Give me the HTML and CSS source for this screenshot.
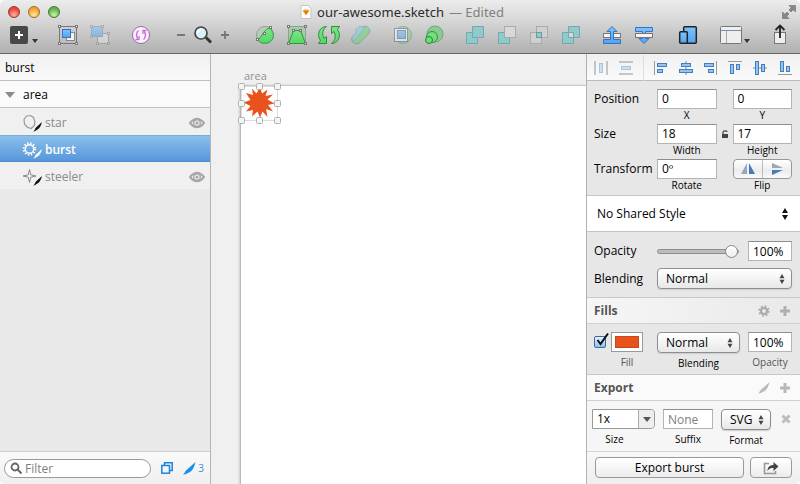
FILE: index.html
```html
<!DOCTYPE html>
<html lang="en">
<head>
<meta charset="utf-8">
<title>our-awesome.sketch</title>
<link rel="stylesheet" href="styles.css">
</head>
<body>
<svg class="defs" aria-hidden="true">
  <defs>
    <linearGradient id="blue" x1="0" y1="0" x2="0" y2="1"><stop offset="0" stop-color="#7cc4fb"/><stop offset="1" stop-color="#55a4f2"/></linearGradient>
    <linearGradient id="green" x1="0" y1="0" x2="0" y2="1"><stop offset="0" stop-color="#7be58a"/><stop offset="1" stop-color="#52d962"/></linearGradient>
    <symbol id="updown" viewBox="0 0 6 12"><path d="M0 5 3 0 6 5zM0 7 3 12 6 7z"/></symbol>
    <symbol id="eye" viewBox="0 0 16 12"><path d="M1 6Q8-2.500 15 6 8 14.500 1 6z" fill="none" stroke="#a6a6a6" stroke-width="2"/><circle cx="8" cy="6" r="3.300" fill="none" stroke="#a6a6a6" stroke-width="1.400"/><circle cx="8" cy="6" r="1.500" fill="#a6a6a6"/></symbol>
    <symbol id="blade" viewBox="0 0 14 14"><path d="M0 13.500C2 12 2.500 9 5 7.500L13.500 0C12.500 4 11 8.500 8 10.500 6 11 4 13.500 0 13.500z"/></symbol>
    <symbol id="plus" viewBox="0 0 12 12"><path d="M4.500 1h3v3.500H11v3H7.500V11h-3V7.500H1v-3h3.500z"/></symbol>
  </defs>
</svg>

<div class="window">
  <header class="chrome">
    <div class="titlebar">
      <div class="lights">
        <button class="light red" aria-label="Close"></button>
        <button class="light amber" aria-label="Minimize"></button>
        <button class="light lime" aria-label="Zoom window"></button>
      </div>
      <h1 class="title">
        <svg width="12" height="14" viewBox="0 0 12 14"><path d="M1 .5h7l3 3v10H1z" fill="#fdfdfd" stroke="#c4c4c4"/><path d="M2.500 6l1.500-1.500h4L9.500 6 6 10z" fill="#f5a623"/><path d="M4 6h4L6 10z" fill="#e0701c"/></svg>
        <span class="name">our-awesome.sketch</span><span class="state">— Edited</span>
      </h1>
      <button class="full" aria-label="Full screen"><svg width="14" height="14" viewBox="0 0 14 14" fill="#888" stroke="#6f6f6f" stroke-width=".6"><path d="M7 .5h6.500V7L11.200 4.700 9 7 7 5 9.200 2.800zM.5 7v6.500H7L4.700 11.200 7 9 5 7 2.800 9.200z"/></svg></button>
    </div>
    <nav class="toolbar" aria-label="Tools">
      <div class="group tight">
        <button class="tool" aria-label="Insert"><svg width="24" height="24" viewBox="0 0 24 24"><rect x="3" y="3" width="18" height="18" rx="2" fill="#484848"/><path d="M8 12h8M12 8v8" stroke="#fff" stroke-width="2"/></svg></button>
        <svg class="caret" width="8" height="24" viewBox="0 0 8 24"><path d="M1 16h6l-3 4z" fill="#333"/></svg>
      </div>
      <div class="group">
        <button class="tool" aria-label="Group"><svg width="24" height="24" viewBox="0 0 24 24"><rect x="3.500" y="3.500" width="17" height="17" fill="none" stroke="#777"/><rect x="10.500" y="9.500" width="8" height="8" fill="#f4f4f4" stroke="#888"/><rect x="6.500" y="6.500" width="8" height="8" fill="url(#blue)" stroke="#3574c4"/><g fill="#fff" stroke="#777"><rect x="2.500" y="2.500" width="2" height="2"/><rect x="19.500" y="2.500" width="2" height="2"/><rect x="2.500" y="19.500" width="2" height="2"/><rect x="19.500" y="19.500" width="2" height="2"/></g></svg></button>
        <button class="tool faded" aria-label="Ungroup"><svg width="24" height="24" viewBox="0 0 24 24"><rect x="9.500" y="10.500" width="11" height="10" fill="#e6e6e6" stroke="#888"/><rect x="3.500" y="3.500" width="11" height="10" fill="url(#blue)" stroke="#5d92cc"/><g fill="#eee" stroke="#888"><rect x="2.500" y="2.500" width="2" height="2"/><rect x="13.500" y="2.500" width="2" height="2"/><rect x="2.500" y="12.500" width="2" height="2"/><rect x="19.500" y="9.500" width="2" height="2"/><rect x="8.500" y="19.500" width="2" height="2"/><rect x="19.500" y="19.500" width="2" height="2"/></g></svg></button>
      </div>
      <div class="group">
        <button class="tool" aria-label="Create symbol"><svg width="24" height="24" viewBox="0 0 24 24" fill="none"><circle cx="12" cy="12" r="8.500" fill="#fbf3fc" stroke="#9a68a8"/><path d="M9.500 7.500C7 9.500 7 13.500 9 16M14.500 16.500c2.500-2 2.500-6 .5-8.500" stroke="#d16be0" stroke-width="1.500"/><path d="M6.500 16.500h3.500V13M17.500 7.500h-3.500V11" stroke="#d16be0" stroke-width="1.300"/></svg></button>
      </div>
      <div class="group zoom spaced">
        <button class="tool small" aria-label="Zoom out"><svg width="14" height="24" viewBox="0 0 14 24"><path d="M3 12h8" stroke="#777" stroke-width="1.800"/></svg></button>
        <button class="tool" aria-label="Zoom"><svg width="22" height="24" viewBox="0 0 22 24"><path d="M14 14.500l5 5" stroke="#333" stroke-width="3"/><circle cx="9" cy="10" r="6" fill="#d9f1fa" stroke="#444" stroke-width="1.700"/><path d="M5.500 10A4 4 0 0 1 9 6.500" stroke="#fff" fill="none" stroke-width="1.500"/></svg></button>
        <button class="tool small" aria-label="Zoom in"><svg width="14" height="24" viewBox="0 0 14 24"><path d="M3 12h8M7 8v8" stroke="#777" stroke-width="1.800"/></svg></button>
      </div>
      <div class="group spaced">
        <button class="tool" aria-label="Edit"><svg width="24" height="24" viewBox="0 0 24 24"><circle cx="12" cy="12" r="8.500" fill="#9fcfa5" fill-opacity=".4" stroke="#8aa58d"/><path d="M4.500 17C9 15 9 8 16 5c4 2 5 7 4 10-2 5-10 8-15.500 2z" fill="url(#green)" stroke="#3a9c49"/><g fill="#fff" stroke="#777"><rect x="3.500" y="15.500" width="2" height="2"/><rect x="10.500" y="9.500" width="2" height="2"/><rect x="16.500" y="3.500" width="2" height="2"/></g></svg></button>
        <button class="tool" aria-label="Transform"><svg width="24" height="24" viewBox="0 0 24 24"><rect x="3.500" y="3.500" width="17" height="17" fill="#8cc893" fill-opacity=".6" stroke="#8aa58d"/><path d="M8.500 7.500h7l5 13h-17z" fill="url(#green)" stroke="#35903f"/><g fill="#eee" stroke="#777"><rect x="2.500" y="2.500" width="2" height="2"/><rect x="19.500" y="2.500" width="2" height="2"/><rect x="2.500" y="19.500" width="2" height="2"/><rect x="19.500" y="19.500" width="2" height="2"/><rect x="7.500" y="6.500" width="2" height="2"/><rect x="14.500" y="6.500" width="2" height="2"/></g></svg></button>
        <button class="tool" aria-label="Rotate"><svg width="24" height="24" viewBox="0 0 24 24" fill="url(#green)" stroke="#338c3e"><path d="M9.500 3.500C3 3.500-1 11 3.500 17.500L1.500 20.500h8v-7L7 15.500C4.500 11 6 6 9.500 3.500zM14.500 20.500C21 20.500 25 13 20.500 6.500L22.500 3.500h-8v7l2.500-2c2.500 4.500 1 9.500-2.500 12z"/></svg></button>
        <button class="tool faded" aria-label="Flatten"><svg width="24" height="24" viewBox="0 0 24 24"><path d="M3.500 13.500 13 4.500a4 4 0 0 1 6 0 4 4 0 0 1 1 6L11 19.500a5 5 0 0 1-7 0 4.500 4.500 0 0 1-.5-6z" fill="#63d572" stroke="#4d965a"/><path d="M4 19 3 16l.5-2.500L7 10V6.500l3-3h3l3 1z" fill="#7dcae5" stroke="#4c93aa" stroke-width=".7"/></svg></button>
      </div>
      <div class="group">
        <button class="tool faded" aria-label="Mask"><svg width="24" height="24" viewBox="0 0 24 24"><circle cx="13" cy="12" r="8.500" fill="#7fd18a" stroke="#529a5d"/><rect x="4.500" y="5.500" width="13" height="13" fill="#fff" stroke="#666"/><rect x="7.500" y="7.500" width="8" height="8" fill="url(#blue)" stroke="#3574c4"/></svg></button>
        <button class="tool" aria-label="Scale"><svg width="24" height="24" viewBox="0 0 24 24"><circle cx="13" cy="11" r="8" fill="#8acb92" stroke="#6ba874"/><circle cx="10" cy="14" r="5.500" fill="#74dd80" stroke="#35903f"/><circle cx="7" cy="17" r="3.500" fill="#64e274" stroke="#287e35"/></svg></button>
      </div>
      <div class="group">
        <button class="tool" aria-label="Union"><svg width="24" height="24" viewBox="0 0 24 24"><path d="M9.500 3.500h11v11h-6v6h-11v-11h6z" fill="#8fcbcd" stroke="#75a8aa"/><path d="M9.500 9.500v5h5" fill="none" stroke="#75a8aa"/></svg></button>
        <button class="tool" aria-label="Subtract"><svg width="24" height="24" viewBox="0 0 24 24"><path d="M3.500 9.500h6v5h5v6h-11z" fill="#8fcbcd" stroke="#75a8aa"/><rect x="9.500" y="3.500" width="11" height="11" fill="#d8d8d8" stroke="#aaa"/></svg></button>
        <button class="tool" aria-label="Intersect"><svg width="24" height="24" viewBox="0 0 24 24"><rect x="9.500" y="3.500" width="11" height="11" fill="#d0d0d0" stroke="#aaa"/><rect x="3.500" y="9.500" width="11" height="11" fill="#d0d0d0" stroke="#aaa"/><rect x="9.500" y="9.500" width="5" height="5" fill="#8fcbcd" stroke="#689c9e"/></svg></button>
        <button class="tool" aria-label="Difference"><svg width="24" height="24" viewBox="0 0 24 24"><path d="M9.500 3.500h11v11h-6v6h-11v-11h6z" fill="#8fcbcd" stroke="#75a8aa"/><rect x="9.500" y="9.500" width="5" height="5" fill="#d8d8d8" stroke="#75a8aa"/></svg></button>
      </div>
      <div class="group">
        <button class="tool" aria-label="Forward"><svg width="24" height="24" viewBox="0 0 24 24"><rect x="3.500" y="10.500" width="17" height="4" fill="#f4f4f4" stroke="#777"/><path d="M12 3.500l5 5h-3.500v8h7v4h-17v-4h7v-8H7z" fill="url(#blue)" stroke="#3574c4"/></svg></button>
        <button class="tool" aria-label="Backward"><svg width="24" height="24" viewBox="0 0 24 24"><path d="M3.500 4.500h17v4h-7v7H17l-5 5-5-5h3.500v-7h-7z" fill="url(#blue)" stroke="#3574c4"/><rect x="3.500" y="10.500" width="17" height="4" fill="#f4f4f4" stroke="#777"/></svg></button>
      </div>
      <div class="group spaced">
        <button class="tool" aria-label="Mirror"><svg width="24" height="24" viewBox="0 0 24 24" fill="url(#blue)" stroke="#222" stroke-width="1.500"><rect x="6.700" y="3.700" width="12.600" height="16.600" rx="1"/><rect x="2.700" y="8.700" width="7.600" height="11.600" rx="1"/></svg></button>
      </div>
      <div class="group tight">
        <button class="tool" aria-label="View"><svg width="24" height="24" viewBox="0 0 24 24"><rect x="2.500" y="3.500" width="21" height="17" rx="1" fill="#eee" stroke="#777"/><path d="M3 7.500h20" stroke="#7b8db5"/><path d="M8.500 8v12" stroke="#aaa"/></svg></button>
        <svg class="caret" width="8" height="24" viewBox="0 0 8 24"><path d="M2 16h6l-3 4z" fill="#333"/></svg>
      </div>
      <div class="group last">
        <button class="tool" aria-label="Share"><svg width="24" height="24" viewBox="0 0 24 24" fill="none"><rect x="6.500" y="9.500" width="11" height="11" fill="#eee" stroke="#777"/><path d="M12 15V3M7.500 7 12 2.500 16.500 7" stroke="#222" stroke-width="1.800"/></svg></button>
      </div>
    </nav>
  </header>

  <main class="body">
    <aside class="sidebar">
      <div class="page">burst</div>
      <div class="board"><svg width="10" height="6" viewBox="0 0 10 6"><path d="M0 0h10L5 6z" fill="#8c8c8c"/></svg>area</div>
      <ul class="layers">
        <li class="layer">
          <svg class="shape" width="20" height="18" viewBox="0 0 20 18"><path d="M4.500 2 8.500 1.500l3 2 1.500 4.500-1 4-3 2.500-4-1.500L2.500 10 2 5.500z" fill="none" stroke="#999" stroke-width="1.200"/><path d="M11 17.500c2-.5 1.500-3 3.500-4.500L20 8c-1 3.500-2 6-4.500 7.500-1.500.5-2 2-4.500 2z" fill="#111"/></svg>
          <span class="label">star</span>
          <button class="eye" aria-label="Hide star"><svg width="16" height="12"><use href="#eye"/></svg></button>
        </li>
        <li class="layer selected">
          <svg class="shape" width="20" height="18" viewBox="0 0 20 18"><circle cx="7.500" cy="8" r="4.200" fill="none" stroke="#fff" stroke-width="1.400"/><circle cx="7.500" cy="8" r="5.800" fill="none" stroke="#fff" stroke-width="2" stroke-dasharray="1.400 1.637"/><path d="M11 17.500c2-.5 1.500-3 3.500-4.500L20 8c-1 3.500-2 6-4.500 7.500-1.500.5-2 2-4.500 2z" fill="#fff"/></svg>
          <span class="label">burst</span>
        </li>
        <li class="layer">
          <svg class="shape" width="20" height="18" viewBox="0 0 20 18"><path d="M7.500 1.500 8.700 6.800 14 8 8.700 9.200 7.500 14.500 6.300 9.200 1 8 6.300 6.800z" fill="#f4f4f4" stroke="#888"/><path d="M11 17.500c2-.5 1.500-3 3.500-4.500L20 8c-1 3.500-2 6-4.500 7.500-1.500.5-2 2-4.500 2z" fill="#111"/></svg>
          <span class="label">steeler</span>
          <button class="eye" aria-label="Hide steeler"><svg width="16" height="12"><use href="#eye"/></svg></button>
        </li>
      </ul>
      <footer class="filterbar">
        <label class="search"><svg width="12" height="12" viewBox="0 0 12 12" fill="none" stroke="#666"><circle cx="5" cy="5" r="3.500" stroke-width="1.800"/><path d="M7.500 7.500l4 4" stroke-width="2"/></svg><input type="search" placeholder="Filter" aria-label="Filter layers"></label>
        <button class="plain" aria-label="Show slices"><svg width="12" height="12" viewBox="0 0 12 12" fill="none" stroke="#1c82dc" stroke-width="1.500"><path d="M3.500 3V.8h7.700v7.700H9"/><rect x=".8" y="3.500" width="7.700" height="7.700"/></svg></button>
        <button class="plain count"><svg width="13" height="13" fill="#1590f0"><use href="#blade"/></svg>3</button>
      </footer>
    </aside>

    <section class="canvas">
      <div class="caption">area</div>
      <div class="artboard">
        <svg class="burst" width="46" height="44" viewBox="-5 -4 46 44">
          <rect x="0.500" y="0.500" width="36" height="34" fill="none" stroke="#ddd"/>
          <path d="M19 1 21 7.500 26.500 3.500 24.500 10 32 8.500 26.500 13.500 33.500 17.500 27 19 32 25.500 25 23 26.500 31 21.500 25.500 19 31.500 16.500 25.500 11 30.500 12 24 5 25.500 9.500 20 2.500 16.500 9.500 14 5 7 12 9 11 2.500 15.500 7.500z" fill="#e9521d"/>
          <g fill="#f4f4f4" stroke="#b0b0b0"><rect x="-2.500" y="-2.500" width="6" height="6" rx="1"/><rect x="15.500" y="-2.500" width="6" height="6" rx="1"/><rect x="33.500" y="-2.500" width="6" height="6" rx="1"/><rect x="-2.500" y="14.500" width="6" height="6" rx="1"/><rect x="33.500" y="14.500" width="6" height="6" rx="1"/><rect x="-2.500" y="31.500" width="6" height="6" rx="1"/><rect x="15.500" y="31.500" width="6" height="6" rx="1"/><rect x="33.500" y="31.500" width="6" height="6" rx="1"/></g>
        </svg>
      </div>
    </section>

    <aside class="inspector">
      <div class="align">
        <button aria-label="Distribute horizontally" class="faded"><svg width="16" height="16" viewBox="0 0 16 16"><path d="M2 1v14M14 1v14" stroke="#777" stroke-width="1.500"/><rect x="6.500" y="3.500" width="3" height="9" fill="#9bd0f5" stroke="#5c98c8"/></svg></button>
        <button aria-label="Distribute vertically" class="faded"><svg width="16" height="16" viewBox="0 0 16 16"><path d="M1 2h14M1 14h14" stroke="#777" stroke-width="1.500"/><rect x="3.500" y="6.500" width="9" height="3" fill="#9bd0f5" stroke="#5c98c8"/></svg></button>
        <span class="rule"></span>
        <button aria-label="Align left"><svg width="16" height="16" viewBox="0 0 16 16"><path d="M1.500 1v14" stroke="#999"/><g fill="#8cc4fb" stroke="#4a7db8"><rect x="4.500" y="3.500" width="9" height="3"/><rect x="4.500" y="9.500" width="5" height="3"/></g></svg></button>
        <button aria-label="Align center"><svg width="16" height="16" viewBox="0 0 16 16"><path d="M8 1v14" stroke="#aaa" stroke-width="1.500"/><g fill="#8cc4fb" stroke="#4a7db8"><rect x="3.500" y="3.500" width="9" height="3"/><rect x="1.500" y="9.500" width="13" height="3"/></g></svg></button>
        <button aria-label="Align right"><svg width="16" height="16" viewBox="0 0 16 16"><path d="M14.500 1v14" stroke="#999"/><g fill="#8cc4fb" stroke="#4a7db8"><rect x="2.500" y="3.500" width="9" height="3"/><rect x="6.500" y="9.500" width="5" height="3"/></g></svg></button>
        <button aria-label="Align top"><svg width="16" height="16" viewBox="0 0 16 16"><path d="M1 1.500h14" stroke="#999"/><g fill="#8cc4fb" stroke="#4a7db8"><rect x="3.500" y="4.500" width="3" height="9"/><rect x="9.500" y="4.500" width="3" height="5"/></g></svg></button>
        <button aria-label="Align middle"><svg width="16" height="16" viewBox="0 0 16 16"><path d="M1 8h14" stroke="#aaa" stroke-width="1.500"/><g fill="#8cc4fb" stroke="#4a7db8"><rect x="3.500" y="1.500" width="3" height="13"/><rect x="9.500" y="4.500" width="3" height="7"/></g></svg></button>
        <button aria-label="Align bottom"><svg width="16" height="16" viewBox="0 0 16 16"><path d="M1 14.500h14" stroke="#999"/><g fill="#8cc4fb" stroke="#4a7db8"><rect x="3.500" y="1.500" width="3" height="10"/><rect x="9.500" y="6.500" width="3" height="5"/></g></svg></button>
      </div>

      <div class="geometry">
        <span>Position</span>
        <div class="cell"><input class="field" id="x" value="0"><label for="x">X</label></div>
        <span></span>
        <div class="cell"><input class="field" id="y" value="0"><label for="y">Y</label></div>
        <span>Size</span>
        <div class="cell"><input class="field" id="w" value="18"><label for="w">Width</label></div>
        <button class="plain lock" aria-label="Lock proportions"><svg width="8" height="8" viewBox="0 0 8 8"><rect x="1" y="4" width="6" height="4" fill="#444"/><path d="M2 4V2.500C2 .5 6 .5 6 2" fill="none" stroke="#444" stroke-width="1.200"/></svg></button>
        <div class="cell"><input class="field" id="h" value="17"><label for="h">Height</label></div>
        <span>Transform</span>
        <div class="cell"><input class="field" id="r" value="0º"><label for="r">Rotate</label></div>
        <span></span>
        <div class="cell">
          <div class="flip">
            <button aria-label="Flip horizontal"><svg width="14" height="12" viewBox="0 0 14 12"><path d="M6 0v11H0z" fill="#9aa5b5"/><path d="M8 0v11h6z" fill="#4879b8"/></svg></button>
            <button aria-label="Flip vertical"><svg width="12" height="12" viewBox="0 0 12 12"><path d="M1 0v5h11z" fill="#9aa5b5"/><path d="M1 12V7h11z" fill="#4879b8"/></svg></button>
          </div>
          <span class="note">Flip</span>
        </div>
      </div>

      <div class="shared"><select aria-label="Shared style"><option>No Shared Style</option></select><svg class="arrows" width="6" height="12"><use href="#updown"/></svg></div>

      <div class="blend">
        <label for="op">Opacity</label>
        <div class="opacity"><input class="slider" id="op" type="range" value="100"><input class="field pct" aria-label="Opacity percent" value="100%"></div>
        <label for="bl">Blending</label>
        <div class="pick"><select id="bl"><option>Normal</option></select><svg class="arrows" width="6" height="10"><use href="#updown"/></svg></div>
      </div>

      <div class="heading">
        <h2>Fills</h2>
        <button class="plain" aria-label="Fill options"><svg width="12" height="12" viewBox="0 0 12 12" fill="none" stroke="#aaa"><circle cx="6" cy="6" r="3" stroke-width="2.200"/><circle cx="6" cy="6" r="4.800" stroke-width="1.800" stroke-dasharray="1.800 1.970"/></svg></button>
        <button class="plain" aria-label="Add fill"><svg width="12" height="12" fill="#b0b0b0"><use href="#plus"/></svg></button>
      </div>

      <div class="fills">
        <label class="tick"><input type="checkbox" checked aria-label="Fill enabled"><svg width="16" height="16" viewBox="0 0 16 16"><path d="M3.500 8l3 4L14 1.500" fill="none" stroke="#111" stroke-width="2"/></svg></label>
        <div class="cell"><button class="well" aria-label="Fill color"><span></span></button><span class="note dim">Fill</span></div>
        <div class="cell fillmode"><div class="pick"><select id="fb"><option>Normal</option></select><svg class="arrows" width="6" height="10"><use href="#updown"/></svg></div><label for="fb">Blending</label></div>
        <div class="cell"><input class="field pct" id="fo" value="100%"><label class="dim" for="fo">Opacity</label></div>
      </div>

      <div class="heading pale">
        <h2>Export</h2>
        <button class="plain" aria-label="Add slice"><svg width="12" height="12" fill="#bbb"><use href="#blade"/></svg></button>
        <button class="plain" aria-label="Add export"><svg width="12" height="12" fill="#b8b8b8"><use href="#plus"/></svg></button>
      </div>

      <div class="export">
        <div class="cell"><div class="combo"><input id="es" value="1x"><button aria-label="Choose size"><svg width="8" height="5" viewBox="0 0 8 5"><path d="M0 0h8L4 5z" fill="#555"/></svg></button></div><label for="es">Size</label></div>
        <div class="cell"><input class="field" id="sf" placeholder="None"><label for="sf">Suffix</label></div>
        <div class="cell"><div class="pick"><select id="fm"><option>SVG</option></select><svg class="arrows" width="6" height="10"><use href="#updown"/></svg></div><label for="fm">Format</label></div>
        <button class="plain remove" aria-label="Remove export"><svg width="10" height="10" viewBox="0 0 10 10"><path d="M1.500 1.500l7 7M8.500 1.500l-7 7" stroke="#bdbdbd" stroke-width="3"/></svg></button>
      </div>

      <div class="actions">
        <button class="push wide">Export burst</button>
        <button class="push" aria-label="Share export"><svg width="16" height="14" viewBox="0 0 16 14"><path d="M6 2.500H1.500v10h11V10" fill="none" stroke="#999" stroke-width="1.600"/><path d="M4.500 10C4.500 6 7 4 10.500 4V1l5 4.500-5 4.500V7C8 7 6 7.500 4.500 10z" fill="#444"/></svg></button>
      </div>
    </aside>
  </main>
</div>
</body>
</html>
```
FILE: styles.css
```css
* { box-sizing: border-box; }

body {
  margin: 0;
  background: #fff;
  color: #000;
  font: 12px/16px "Open Sans", "Noto Sans", sans-serif;
}

button, input, select {
  margin: 0;
  padding: 0;
  border: 0;
  border-radius: 0;
  background: none;
  color: inherit;
  font: inherit;
  outline: 0;
  appearance: none;
}

h1, h2 { margin: 0; font: inherit; }
ul { margin: 0; padding: 0; list-style: none; }
svg { display: block; flex: none; }
.defs { position: absolute; width: 0; height: 0; }
.faded { opacity: .5; }
.plain { display: flex; align-items: center; }

.window {
  display: flex;
  flex-direction: column;
  min-height: 100vh;
  border-radius: 5px;
  overflow: hidden;
}

/* Title bar and tools */
.chrome {
  background: linear-gradient(#ececec, #d6d6d6 40%, #b0b0b0);
  border-bottom: 1px solid #686868;
}
.titlebar {
  display: grid;
  grid-template-columns: 1fr auto 1fr;
  align-items: center;
  height: 23px;
  padding: 0 4px 0 8px;
}
.lights { display: flex; gap: 8px; }
.light {
  width: 12px;
  height: 12px;
  border: 1px solid #777;
  border-radius: 50%;
}
.red { background: radial-gradient(circle at 50% 80%, #ffb3a6, #e9463f 65%); border-color: #8f3834; }
.amber { background: radial-gradient(circle at 50% 80%, #ffe9a0, #f0a530 65%); border-color: #9b6a28; }
.lime { background: radial-gradient(circle at 50% 80%, #d0f5a8, #5fb54c 65%); border-color: #3f7434; }
.title { display: flex; align-items: center; gap: 5px; font-family: "Noto Sans", "Open Sans", sans-serif; font-size: 13px; }
.name { color: #2b2b2b; }
.state { color: #808080; }
.full { justify-self: end; }

.toolbar {
  display: flex;
  gap: 17px;
  height: 30px;
  padding: 0 8px 0 7px;
}
.group { display: flex; gap: 8px; height: 24px; }
.tight { gap: 0; }
.zoom { gap: 4px; }
.spaced { margin-left: 4px; }
.last { margin-left: auto; }

.body { display: flex; flex: 1; }

/* Layer list */
.sidebar {
  display: flex;
  flex-direction: column;
  width: 211px;
  background: #e9e9e9;
  border-right: 1px solid #b5b5b5;
}
.page, .board {
  display: flex;
  align-items: center;
  height: 27px;
  padding: 2px 5px 0;
  border-bottom: 1px solid #c0c0c0;
}
.page { background: linear-gradient(#f0f0f0, #fafafa); }
.board { gap: 8px; background: #fafafa; }
.layers { flex: 1; }
.layer {
  display: flex;
  align-items: center;
  height: 27px;
  padding: 2px 5px 0 22px;
  background: #f0f0f0;
  color: #8a8a8a;
}
.layer .label { flex: 1; margin-left: 3px; }
.selected {
  background: linear-gradient(#8cc0ec, #5696da);
  border-top: 1px solid #79add9;
  border-bottom: 1px solid #4f8acb;
  color: #fff;
  font-weight: 600;
}
.filterbar {
  display: flex;
  align-items: center;
  gap: 10px;
  height: 33px;
  padding: 0 6px 0 4px;
  border-top: 1px solid #cfcfcf;
  background: linear-gradient(#fafafa, #efefef);
}
.search {
  display: flex;
  flex: 1;
  align-items: center;
  gap: 3px;
  height: 19px;
  min-width: 0;
  padding: 0 5px;
  border: 1px solid #999;
  border-radius: 10px;
  background: #fff;
}
.search input { flex: 1; min-width: 0; height: 17px; }
::placeholder { color: #808080; opacity: 1; }
.count { gap: 2px; color: #3b8ee0; font-size: 10px; }

/* Canvas */
.canvas {
  display: flex;
  flex: 1;
  flex-direction: column;
  min-width: 0;
  padding: 13px 0 0 29px;
  background: #f0f0f0;
}
.caption { padding-left: 4px; color: #909090; font-size: 11px; line-height: 18px; }
.artboard {
  position: relative;
  flex: 1;
  border-top: 1px solid #c8c8c8;
  border-left: 1px solid #b8b8b8;
  background: #fff;
  box-shadow: -1px 0 2px #ccc;
}
.burst { position: absolute; top: -4px; left: -5px; }

/* Inspector */
.inspector {
  display: flex;
  flex-direction: column;
  width: 214px;
  border-left: 1px solid #b0b0b0;
  background: #e7e7e7;
}
.align {
  display: flex;
  align-items: center;
  justify-content: space-between;
  height: 27px;
  padding: 2px 7px 0 6px;
  border-bottom: 1px solid #bbb;
  background: linear-gradient(#f0f0f0, #fafafa);
}
.rule { width: 1px; height: 26px; background: #ddd; }

.geometry {
  display: grid;
  grid-template-columns: 63px 1fr 16px 1fr;
  row-gap: 2px;
  padding: 8px 8px 3px 7px;
  line-height: 20px;
}
.cell { display: flex; flex-direction: column; min-width: 0; }
.cell label, .note { font-size: 10px; line-height: 14px; text-align: center; }
.geometry label, .geometry .note { margin-top: -1px; }
.field {
  width: 100%;
  height: 20px;
  padding: 0 4px;
  border: 1px solid #b4b4b4;
  border-top-color: #8e8e8e;
  background: #fff;
}
.lock { height: 20px; padding-left: 4px; }
.flip {
  display: flex;
  height: 20px;
  border: 1px solid #999;
  border-radius: 4px;
  background: linear-gradient(#fff, #ececec 60%, #fafafa);
}
.flip button { display: flex; flex: 1; align-items: center; justify-content: center; }
.flip button + button { border-left: 1px solid #bbb; }

.shared {
  position: relative;
  height: 37px;
  border-top: 1px solid #c4c4c4;
  border-bottom: 1px solid #c4c4c4;
  background: #fff;
}
.shared select { width: 100%; height: 35px; padding-left: 10px; }
.arrows { position: absolute; top: 50%; right: 7px; transform: translateY(-50%); fill: #444; pointer-events: none; }
.shared .arrows { right: 12px; fill: #111; }

.blend {
  display: grid;
  grid-template-columns: 63px minmax(0, 1fr);
  align-items: center;
  row-gap: 7px;
  padding: 9px 8px 8px 7px;
}
.opacity { display: flex; align-items: center; gap: 9px; }
.field.pct { flex: none; width: 44px; }
.slider { flex: 1; min-width: 0; height: 14px; }
.slider::-webkit-slider-runnable-track {
  height: 5px;
  border: 1px solid #8c8c8c;
  border-radius: 3px;
  background: #bdbdbd;
}
.slider::-webkit-slider-thumb {
  width: 13px;
  height: 13px;
  margin-top: -5px;
  border: 1px solid #888;
  border-radius: 50%;
  background: linear-gradient(#fff, #eee);
  appearance: none;
}
.pick { position: relative; }
.pick select {
  display: block;
  width: 100%;
  height: 21px;
  padding-left: 8px;
  border: 1px solid #8e8e8e;
  border-radius: 4px;
  background: linear-gradient(#fff, #f4f4f4 50%, #e8e8e8);
  box-shadow: 0 1px 1px #ccc;
}

.heading {
  display: flex;
  align-items: center;
  gap: 9px;
  height: 27px;
  padding: 0 9px 0 7px;
  border-top: 1px solid #c8c8c8;
  border-bottom: 1px solid #d0d0d0;
  background: linear-gradient(90deg, #f6f6f6, #e9e9e9);
}
.heading h2 { flex: 1; color: #555; font-weight: 700; }
.heading.pale { background: #fafafa; }

.fills {
  display: grid;
  grid-template-columns: 17px 32px 1fr 44px;
  padding: 8px 8px 4px 7px;
}
.fillmode { margin: 0 8px 0 14px; }
.fills .cell label, .fills .note { margin-top: 3px; }
.cell .dim { color: #555; }
.tick { position: relative; height: 20px; padding-top: 4px; }
.tick input {
  display: block;
  width: 12px;
  height: 12px;
  border: 1px solid #41689c;
  border-radius: 2px;
  background: linear-gradient(#e4f1fd, #8fc1f2);
}
.tick svg { position: absolute; top: 0; left: 0; }
.tick input:not(:checked) + svg { display: none; }
.well { height: 20px; padding: 3px; border: 1px solid #999; background: #fff; }
.well span { display: block; height: 12px; border: 1px solid #c24a1c; background: #e9521d; }

.export {
  display: grid;
  grid-template-columns: 63px 50px 50px 1fr;
  column-gap: 8px;
  padding: 8px 8px 4px 5px;
  background: #f6f6f6;
}
.export .cell label { margin-top: 3px; }
.export .cell label[for="es"] { padding-right: 18px; }
.combo {
  display: flex;
  height: 20px;
  border: 1px solid #999;
  border-radius: 0 4px 4px 0;
  background: #fff;
}
.combo input { flex: 1; min-width: 0; padding-left: 4px; }
.combo button {
  display: flex;
  align-items: center;
  justify-content: center;
  width: 16px;
  border-left: 1px solid #aaa;
  border-radius: 0 4px 4px 0;
  background: #eee;
}
.remove { justify-content: center; height: 20px; }

.actions {
  display: flex;
  flex: 1;
  align-items: flex-start;
  gap: 6px;
  padding: 5px 8px 4px;
  border-top: 1px solid #d5d5d5;
  background: linear-gradient(#f8f8f8, #eee);
}
.push {
  display: flex;
  align-items: center;
  justify-content: center;
  width: 42px;
  height: 21px;
  border: 1px solid #999;
  border-radius: 4px;
  background: linear-gradient(#fff, #f6f6f6 50%, #ebebeb);
}
.wide { flex: 1; }
```
